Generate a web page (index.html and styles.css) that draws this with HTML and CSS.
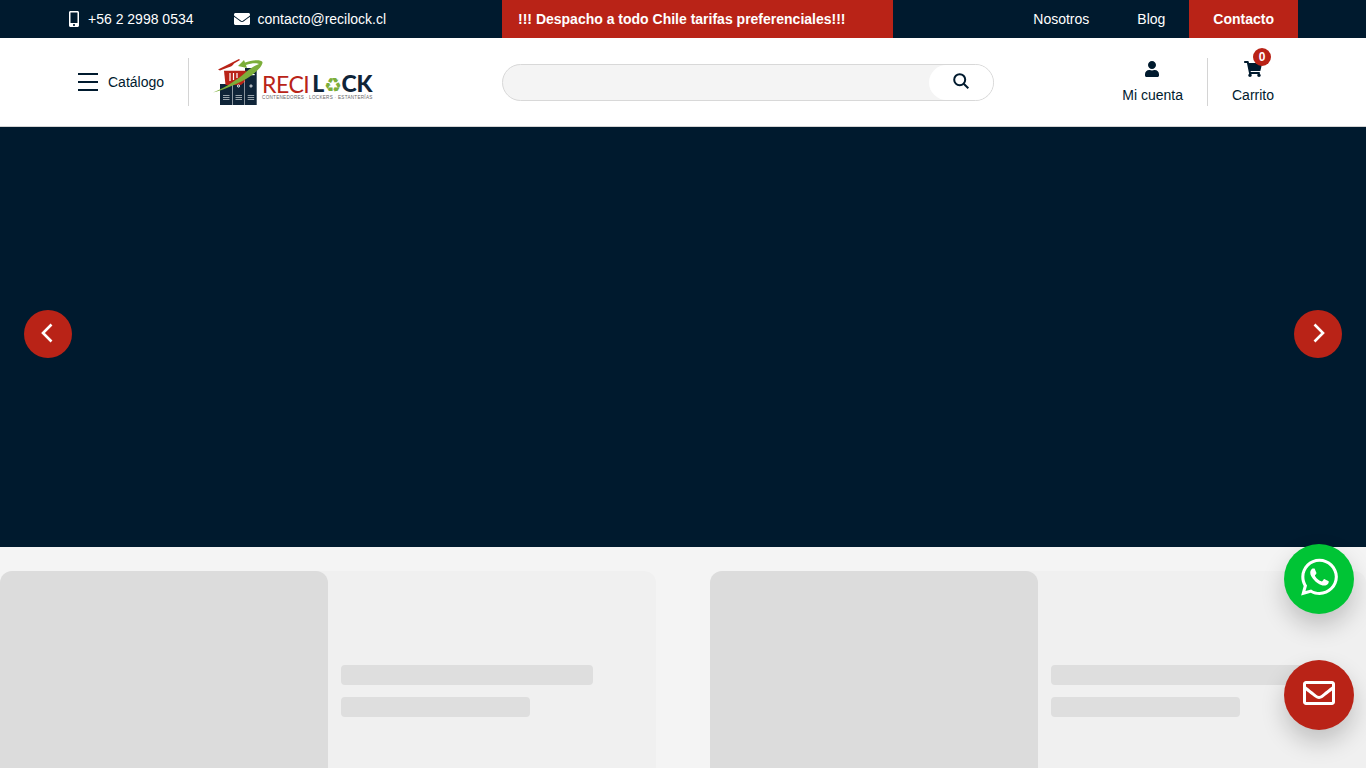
FILE: index.html
```html
<!DOCTYPE html>
<html lang="es">
<head>
    <meta charset="UTF-8">
    <meta name="viewport" content="width=device-width, initial-scale=1.0">
    <title>Recilock</title>
    <link rel="stylesheet" href="styles.css">
</head>
<body>
<div class="page">
    <!-- barra superior -->
    <div class="topbar">
        <div class="top-contact">
            <a class="top-item" href="#">
                <svg class="icon-phone" viewBox="0 0 320 512"><path d="M272 0H48C21.5 0 0 21.5 0 48v416c0 26.5 21.5 48 48 48h224c26.5 0 48-21.5 48-48V48c0-26.5-21.5-48-48-48zM160 480c-17.7 0-32-14.3-32-32s14.3-32 32-32 32 14.3 32 32-14.3 32-32 32zm112-108c0 6.6-5.4 12-12 12H60c-6.6 0-12-5.4-12-12V60c0-6.6 5.4-12 12-12h200c6.6 0 12 5.4 12 12v312z"/></svg>
                +56 2 2998 0534
            </a>
            <a class="top-item" href="#">
                <svg class="icon-mail" viewBox="0 0 512 512"><path d="M502.3 190.8c3.9-3.1 9.7-.2 9.7 4.7V400c0 26.5-21.5 48-48 48H48c-26.5 0-48-21.5-48-48V195.6c0-5 5.7-7.8 9.7-4.7 22.4 17.4 52.1 39.5 154.1 113.6 21.1 15.4 56.7 47.8 92.2 47.6 35.7.3 72-32.8 92.3-47.6 102-74.1 131.6-96.3 154-113.7zM256 320c23.2.4 56.6-29.2 73.4-41.4 132.7-96.3 142.8-104.7 173.4-128.7 5.8-4.5 9.2-11.5 9.2-18.9v-19c0-26.5-21.5-48-48-48H48C21.5 64 0 85.5 0 112v19c0 7.4 3.4 14.3 9.2 18.9 30.6 23.9 40.7 32.4 173.4 128.7 16.8 12.2 50.2 41.8 73.4 41.4z"/></svg>
                contacto@recilock.cl
            </a>
        </div>
        <div class="promo">!!! Despacho a todo Chile tarifas preferenciales!!!</div>
        <nav class="top-links">
            <a href="#">Nosotros</a>
            <a href="#">Blog</a>
            <a class="top-cta" href="#">Contacto</a>
        </nav>
    </div>

    <!-- cabecera -->
    <header class="header">
        <div class="header-left">
            <button class="catalog" type="button">
                <span class="burger"><span></span><span></span><span></span></span>
                Catálogo
            </button>
            <a class="logo" href="#">
                <svg class="logo-mark" viewBox="0 0 50 50">
                    <rect x="7" y="27" width="12.4" height="21" fill="#0f2438"/>
                    <rect x="19.9" y="25" width="11.6" height="23" fill="#0f2438"/>
                    <rect x="32" y="11" width="11.7" height="37" fill="#0f2438"/>
                    <rect x="34" y="14" width="7.7" height="1.2" fill="#fff"/>
                    <rect x="34" y="17" width="7.7" height="1.2" fill="#fff"/>
                    <path d="M11 13.7H33.7L31.5 25 28 28H12.5Z" fill="#b92317"/>
                    <path d="M17 16V24M20.5 16V23M24 16V21" stroke="#fff" stroke-width="1.2"/>
                    <path d="M5 12.5L26 2 27 3 21 6.5C20 9 17 10 15 10.5L7 13.5Z" fill="#b92317"/>
                    <g fill="none" stroke="#fff" stroke-width="0.9">
                        <circle cx="25.5" cy="29" r="1.1"/>
                        <circle cx="38" cy="29" r="1.1"/>
                    </g>
                    <g stroke="#a9b3ba" stroke-width="0.9">
                        <path d="M10 38.5h6.5M10 40.5h6.5M10 42.5h6.5"/>
                        <path d="M22.5 38.5h6.5M22.5 40.5h6.5M22.5 42.5h6.5"/>
                        <path d="M34.7 38.5h6.5M34.7 40.5h6.5M34.7 42.5h6.5"/>
                    </g>
                    <path d="M0 35.5C14 30 25 22 33 15 38 10.5 43 8 46 7 44 5.5 38 6 33 8L34 11 25 9 31 3 32 5.5C38 3 48 2 49.5 5 50 10 40 18 33 22 22 28 10 33 0 35.5Z" fill="#7cae3a"/>
                </svg>
                <span class="logo-text">
                    <span class="logo-name"><span class="logo-reci">RECI</span><span class="logo-lock">L<span class="logo-o">♻</span>CK</span></span>
                    <span class="logo-sub">CONTENEDORES · LOCKERS · ESTANTERÍAS</span>
                </span>
            </a>
        </div>
        <form class="search" onsubmit="return false;">
            <input class="search-input" type="text" aria-label="Buscar">
            <button class="search-btn" type="submit" aria-label="Buscar">
                <svg viewBox="0 0 16 16"><circle cx="6.7" cy="6.7" r="5.5"/><path d="M10.7 10.7L15.3 15.3"/></svg>
            </button>
        </form>
        <div class="header-right">
            <a class="account" href="#">
                <svg class="icon-user" viewBox="0 0 448 512"><path d="M224 256c70.7 0 128-57.3 128-128S294.7 0 224 0 96 57.3 96 128s57.3 128 128 128zm89.6 32h-16.7c-22.2 10.2-46.9 16-72.9 16s-50.6-5.8-72.9-16h-16.7C60.2 288 0 348.2 0 422.4V464c0 26.5 21.5 48 48 48h352c26.5 0 48-21.5 48-48v-41.6c0-74.2-60.2-134.4-134.4-134.4z"/></svg>
                Mi cuenta
            </a>
            <a class="cart" href="#">
                <span class="cart-icon">
                    <svg class="icon-cart" viewBox="0 0 576 512"><path d="M528.12 301.319l47.273-208C578.806 78.301 567.391 64 551.99 64H159.208l-9.166-44.81C147.758 8.021 137.93 0 126.529 0H24C10.745 0 0 10.745 0 24v16c0 13.255 10.745 24 24 24h69.883l70.248 343.435C147.325 417.1 136 435.222 136 456c0 30.928 25.072 56 56 56s56-25.072 56-56c0-15.674-6.447-29.835-16.824-40h209.647C430.447 426.165 424 440.326 424 456c0 30.928 25.072 56 56 56s56-25.072 56-56c0-22.172-12.888-41.332-31.579-50.405l5.517-24.276c3.413-15.018-8.002-29.319-23.403-29.319H218.117l-6.545-32h293.145c11.206 0 20.92-7.754 23.403-18.681z"/></svg>
                    <span class="cart-count">0</span>
                </span>
                Carrito
            </a>
        </div>
    </header>

    <!-- slider -->
    <section class="hero">
        <button class="hero-arrow hero-prev" type="button" aria-label="Anterior">
            <svg viewBox="0 0 12 20"><path d="M10.5 1.5L2 10l8.5 8.5"/></svg>
        </button>
        <button class="hero-arrow hero-next" type="button" aria-label="Siguiente">
            <svg viewBox="0 0 12 20"><path d="M1.5 1.5L10 10l-8.5 8.5"/></svg>
        </button>
    </section>

    <!-- tarjetas cargando -->
    <section class="cards">
        <div class="card">
            <div class="card-img"></div>
            <div class="card-body">
                <div class="bar bar-long"></div>
                <div class="bar bar-short"></div>
            </div>
        </div>
        <div class="card">
            <div class="card-img"></div>
            <div class="card-body">
                <div class="bar bar-long"></div>
                <div class="bar bar-short"></div>
            </div>
        </div>
    </section>
</div>

<!-- botones flotantes -->
<div class="floating">
    <a class="float-btn float-whatsapp" href="#" aria-label="WhatsApp">
        <svg viewBox="0 0 448 512"><path d="M380.9 97.1C339 55.1 283.2 32 223.9 32c-122.4 0-222 99.6-222 222 0 39.1 10.2 77.3 29.6 111L0 480l117.7-30.9c32.4 17.7 68.9 27 106.1 27h.1c122.3 0 224.1-99.6 224.1-222 0-59.3-25.2-115-67.1-157zm-157 341.6c-33.2 0-65.7-8.9-94-25.7l-6.7-4-69.8 18.3L72 359.2l-4.4-7c-18.5-29.4-28.2-63.3-28.2-98.2 0-101.7 82.8-184.5 184.6-184.5 49.3 0 95.6 19.2 130.4 54.1 34.8 34.9 56.2 81.2 56.1 130.5 0 101.8-84.9 184.6-186.6 184.6zm101.2-138.2c-5.5-2.8-32.8-16.2-37.9-18-5.1-1.9-8.8-2.8-12.5 2.8-3.7 5.6-14.3 18-17.6 21.8-3.2 3.7-6.5 4.2-12 1.4-32.6-16.3-54-29.1-75.5-66-5.7-9.8 5.7-9.1 16.3-30.3 1.8-3.7.9-6.9-.5-9.7-1.4-2.8-12.5-30.1-17.1-41.2-4.5-10.8-9.1-9.3-12.5-9.5-3.2-.2-6.9-.2-10.6-.2-3.7 0-9.7 1.4-14.8 6.9-5.1 5.6-19.4 19-19.4 46.3 0 27.3 19.9 53.7 22.6 57.4 2.8 3.7 39.1 59.7 94.8 83.8 35.2 15.2 49 16.5 66.6 13.9 10.7-1.6 32.8-13.4 37.4-26.4 4.6-13 4.6-24.1 3.2-26.4-1.3-2.5-5-3.9-10.5-6.6z"/></svg>
    </a>
    <a class="float-btn float-mail" href="#" aria-label="Correo">
        <svg viewBox="0 0 512 512"><path d="M464 64H48C21.49 64 0 85.49 0 112v288c0 26.51 21.49 48 48 48h416c26.51 0 48-21.49 48-48V112c0-26.51-21.49-48-48-48zm0 48v40.805c-22.422 18.259-58.168 46.651-134.587 106.49-16.841 13.247-50.201 45.072-73.413 44.701-23.208.375-56.579-31.459-73.413-44.701C106.18 199.465 70.425 171.067 48 152.805V112h416zM48 400V214.398c22.914 18.251 55.409 43.862 104.938 82.646 21.857 17.205 60.134 55.186 103.062 54.955 42.717.231 80.509-37.199 103.053-54.947 49.528-38.783 82.032-64.401 104.947-82.653V400H48z"/></svg>
    </a>
</div>
</body>
</html>
```

FILE: styles.css
```css
* {
    box-sizing: border-box;
}

body {
    margin: 0;
    background-color: #f4f4f4;
    color: #001a2e;
    font-family: "Liberation Sans", Arial, sans-serif;
    font-size: 14px;
    line-height: 16px;
}

a {
    color: inherit;
    text-decoration: none;
}

button {
    font: inherit;
    color: inherit;
    border: 0;
    background: none;
    padding: 0;
    cursor: pointer;
}

.page {
    height: 100vh;
    overflow: hidden;
}

/* barra superior */
.topbar {
    display: flex;
    height: 38px;
    padding: 0 68px;
    background-color: #001a2e;
    color: #fff;
}

.top-contact {
    display: flex;
    align-items: center;
    gap: 40px;
    width: 434px;
}

.top-item {
    display: flex;
    align-items: center;
    gap: 8px;
}

.icon-phone {
    width: 12px;
    height: 16px;
    fill: #fff;
}

.icon-mail {
    width: 16px;
    height: 16px;
    fill: #fff;
}

.promo {
    display: flex;
    align-items: center;
    width: 391px;
    padding-left: 16px;
    background-color: #b92317;
    font-weight: 700;
}

.top-links {
    display: flex;
    flex: 1;
    justify-content: flex-end;
}

.top-links a {
    display: flex;
    align-items: center;
    padding: 0 24px;
}

.top-links .top-cta {
    background-color: #b92317;
    font-weight: 700;
}

/* cabecera */
.header {
    display: flex;
    align-items: center;
    height: 89px;
    padding: 0 92px 1px 78px;
    background-color: #fff;
    border-bottom: 1px solid #d4d4d4;
}

.header-left {
    display: flex;
    align-items: center;
    width: 424px;
}

.catalog {
    display: flex;
    align-items: center;
    gap: 10px;
    height: 48px;
    padding-right: 24px;
    border-right: 1px solid #d4d4d4;
}

.burger {
    display: flex;
    flex-direction: column;
    gap: 6px;
    width: 20px;
}

.burger span {
    height: 2px;
    background-color: #001a2e;
}

.logo {
    display: flex;
    margin-left: 24px;
}

.logo-mark {
    width: 50px;
    height: 50px;
}

.logo-text {
    display: flex;
    flex-direction: column;
    margin: 16px 0 0 -1px;
}

.logo-name {
    display: flex;
    align-items: center;
    height: 22px;
    font-family: Lato, "Liberation Sans", sans-serif;
    font-size: 23px;
    line-height: 22px;
}

.logo-reci {
    font-weight: 400;
    letter-spacing: -0.5px;
    color: #b92317;
    margin-right: 3px;
}

.logo-lock {
    font-weight: 900;
    color: #0f2438;
    letter-spacing: -0.3px;
}

.logo-o {
    font-family: "DejaVu Sans", sans-serif;
    font-size: 20px;
    font-weight: 400;
    color: #7cae3a;
}

.logo-sub {
    font-size: 4.6px;
    line-height: 6px;
    letter-spacing: 0.28px;
    color: #666;
    white-space: nowrap;
}

.search {
    display: flex;
    width: 492px;
    height: 37px;
    margin-top: 1px;
    background-color: #f4f4f4;
    border: 1px solid #d8d8d8;
    border-radius: 19px;
}

.search-input {
    flex: 1;
    min-width: 0;
    border: 0;
    background: none;
    outline: none;
}

.search-btn {
    display: flex;
    align-items: center;
    justify-content: center;
    width: 64px;
    background-color: #fff;
    border-radius: 18px;
}

.search-btn svg {
    width: 16px;
    height: 16px;
    margin-top: -2px;
    fill: none;
    stroke: #001a2e;
    stroke-width: 2;
}

.header-right {
    display: flex;
    flex: 1;
    justify-content: flex-end;
}

.account,
.cart {
    display: flex;
    flex-direction: column;
    align-items: center;
    justify-content: center;
    gap: 10px;
    height: 48px;
}

.account {
    padding-right: 24px;
    border-right: 1px solid #d4d4d4;
}

.cart {
    padding-left: 24px;
}

.icon-user {
    width: 14px;
    height: 16px;
    margin-right: 1px;
    fill: #001a2e;
}

.cart-icon {
    position: relative;
    height: 16px;
}

.icon-cart {
    display: block;
    width: 18px;
    height: 16px;
    fill: #001a2e;
}

.cart-count {
    position: absolute;
    top: -13px;
    left: 9px;
    width: 18px;
    height: 18px;
    border-radius: 50%;
    background-color: #b92317;
    color: #fff;
    font-size: 12px;
    font-weight: 700;
    line-height: 18px;
    text-align: center;
}

/* slider */
.hero {
    position: relative;
    height: 420px;
    background-color: #001a2e;
}

.hero-arrow {
    position: absolute;
    top: 183px;
    display: flex;
    align-items: center;
    justify-content: center;
    width: 48px;
    height: 48px;
    border-radius: 50%;
    background-color: #b92317;
}

.hero-arrow svg {
    width: 12px;
    height: 20px;
    margin-top: -2px;
    fill: none;
    stroke: #fff;
    stroke-width: 2.6;
}

.hero-prev {
    left: 24px;
}

.hero-prev svg {
    margin-right: 2px;
}

.hero-next {
    right: 24px;
}

.hero-next svg {
    margin-left: 2px;
}

/* tarjetas cargando */
.cards {
    display: flex;
    gap: 54px;
    padding-top: 24px;
}

.card {
    display: flex;
    flex: 1;
    height: 240px;
    background-color: #f0f0f0;
    border-radius: 12px;
}

.card-img {
    width: 328px;
    background-color: #dcdcdc;
    border-radius: 12px;
}

.card-body {
    display: flex;
    flex: 1;
    flex-direction: column;
    justify-content: center;
    gap: 12px;
    padding-left: 13px;
}

.bar {
    height: 20px;
    background-color: #dedede;
    border-radius: 4px;
}

.bar-long {
    width: 252px;
}

.bar-short {
    width: 189px;
}

/* botones flotantes */
.floating {
    position: fixed;
    right: 12px;
    bottom: 38px;
    display: flex;
    flex-direction: column;
    gap: 46px;
}

.float-btn {
    display: flex;
    align-items: center;
    justify-content: center;
    width: 70px;
    height: 70px;
    padding-bottom: 4px;
    border-radius: 50%;
    box-shadow: 0 12px 24px rgba(0, 0, 0, 0.2);
}

.float-btn svg {
    fill: #fff;
}

.float-whatsapp {
    background-color: #00c435;
}

.float-whatsapp svg {
    width: 37px;
    height: 42px;
}

.float-mail {
    background-color: #b92317;
}

.float-mail svg {
    width: 32px;
    height: 32px;
}
```
